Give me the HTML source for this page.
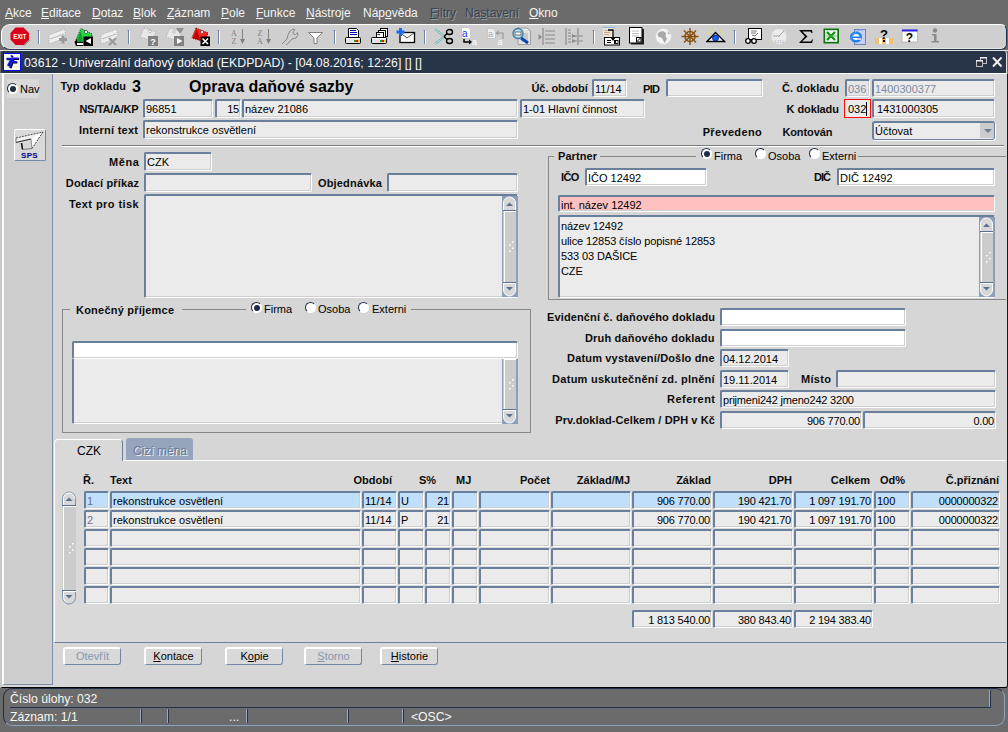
<!DOCTYPE html>
<html><head><meta charset="utf-8">
<style>
*{box-sizing:border-box}
html,body{margin:0;padding:0;width:1008px;height:732px;overflow:hidden;background:#6b6b6b;font-family:"Liberation Sans",sans-serif;font-size:11px;color:#000}
.a{position:absolute}
.menu{position:absolute;top:0;left:0;width:1008px;height:24px;background:#6b6b6b}
.mi{position:absolute;top:6px;font-size:12px;color:#f4f4f4;line-height:14px}
.mi u{text-decoration:underline;text-underline-offset:1px}
.mi.dis{color:#34425a;text-shadow:1px 1px 0 #9a9a90}
.tb{position:absolute;left:1px;top:24px;width:1006px;height:26px;background:#cfcfcf;border:1px solid #fff;border-right:1px solid #24344c;border-bottom:1px solid #24344c;box-shadow:inset 0 -1px 0 #e6e6e6;border-radius:9px 6px 6px 9px}
.sep{position:absolute;top:8px;width:2px;height:13px;border-left:1px solid #6f84a8;border-right:1px solid #fff}
.title{position:absolute;left:1px;top:51px;width:1006px;height:22px;background:#283548;border-right:1px solid #e0e0e0;border-top-left-radius:2px;border-top-right-radius:3px}
.tt{position:absolute;left:23px;top:4px;font-size:12.3px;color:#f8f8f8;line-height:16px;white-space:nowrap}
.win{position:absolute;left:0;top:73px;width:1008px;height:615px;background:#d6d6d6;border-left:2px solid #c8c8c8;border-top:1px solid #fff;border-right:1px solid #1a1a1a;border-bottom:1px solid #000;border-bottom-right-radius:3px}
.nav{position:absolute;left:2px;top:74px;width:51px;height:611px;background:#cdcdcd;border-left:2px solid #fff;border-right:1px solid #7d8fa8;border-bottom:1px solid #7d8fa8}
.lb{position:absolute;font-weight:bold;font-size:11px;white-space:nowrap;line-height:17px;color:#0c0c0c;padding-top:1px}
.f{position:absolute;background:#ebebeb;border-top:2px solid #6a7f9c;border-left:2px solid #6a7f9c;border-right:1px solid #fff;border-bottom:1px solid #fff;box-shadow:inset -1px -1px 0 #cfcfcf;border-radius:2px;font-size:11px;line-height:15px;padding-left:1px;padding-top:1px;white-space:nowrap;overflow:hidden;color:#000}
.f.w{background:#fff}
.f.r{text-align:right;padding-right:1px;letter-spacing:-0.2px}
.f.dis{color:#7a8aa2}
.hr{position:absolute;height:2px;border-top:1px solid #7c7c7c;border-bottom:1px solid #fff}
.fr{position:absolute;border:1px solid #888}
.rad{position:absolute;width:11px;height:11px;border-radius:50%;background:#fff;border:1px solid #1e2d44;border-right-color:#fff;border-bottom-color:#fff}
.rad.on::after{content:"";position:absolute;left:1.5px;top:1.5px;width:6px;height:6px;border-radius:50%;background:#1e2d44}
.rt{position:absolute;font-size:11px;line-height:14px;white-space:nowrap;padding-top:1px}
.btn{position:absolute;height:18px;background:#d9d9d9;border:1px solid #7488a6;border-top:2px solid #fff;border-left:2px solid #fff;border-radius:3px;text-align:center;font-size:11px;line-height:15px;padding-top:0px}
.btn.dis{color:#8797ad}
.vsb{position:absolute;width:16px;background:#c8c8c8;border:1px solid #8a9ab2;border-radius:7px}
.stat{position:absolute;left:3px;top:688px;width:1002px;height:38px;border:1px solid #1e2d44;border-right-color:#8ea2bf;border-bottom-color:#8ea2bf;border-radius:9px}
.st{position:absolute;font-size:12.2px;color:#f8f8f0;line-height:15px;white-space:nowrap;padding-top:1px}
.dv{position:absolute;top:709px;width:2px;height:14px;border-left:1px solid #9aaac2;border-right:1px solid #24344c}
</style></head>
<body>
<!-- MENU -->
<div class="menu">
<div class="mi" style="left:5px"><u>A</u>kce</div>
<div class="mi" style="left:41px"><u>E</u>ditace</div>
<div class="mi" style="left:92px"><u>D</u>otaz</div>
<div class="mi" style="left:133px"><u>B</u>lok</div>
<div class="mi" style="left:167px"><u>Z</u>áznam</div>
<div class="mi" style="left:221px"><u>P</u>ole</div>
<div class="mi" style="left:256px"><u>F</u>unkce</div>
<div class="mi" style="left:306px"><u>N</u>ástroje</div>
<div class="mi" style="left:363px">Náp<u>o</u>věda</div>
<div class="mi dis" style="left:430px"><u>F</u>iltry</div>
<div class="mi dis" style="left:465px">Na<u>s</u>tavení</div>
<div class="mi" style="left:529px"><u>O</u>kno</div>
</div>
<!-- TOOLBAR -->
<div class="tb" id="tb"></div>
<!--ICONS--><svg class="a" style="left:10px;top:27px" width="20" height="19" viewBox="0 0 20 19"><polygon points="5.5,0.5 13.5,0.5 19,6 19,12.5 13.5,18 5.5,18 0.5,12.5 0.5,6" fill="#d8001c"/><polygon points="14,18.5 19.5,13" stroke="#7a8a8a" stroke-width="1" fill="none"/><text x="9.8" y="11.8" font-family="Liberation Sans" font-weight="bold" font-size="6.4" fill="#fff" text-anchor="middle" textLength="13" lengthAdjust="spacingAndGlyphs">EXIT</text></svg>
<div class="a" style="left:38px;top:30px;width:1px;height:14px;background:#6f84a8"></div><div class="a" style="left:39px;top:31px;width:1px;height:13px;background:#fff"></div><div class="a" style="left:37px;top:30px;width:1px;height:1px;background:#9fb0c8"></div>
<div class="a" style="left:128px;top:30px;width:1px;height:14px;background:#6f84a8"></div><div class="a" style="left:129px;top:31px;width:1px;height:13px;background:#fff"></div><div class="a" style="left:127px;top:30px;width:1px;height:1px;background:#9fb0c8"></div>
<div class="a" style="left:218px;top:30px;width:1px;height:14px;background:#6f84a8"></div><div class="a" style="left:219px;top:31px;width:1px;height:13px;background:#fff"></div><div class="a" style="left:217px;top:30px;width:1px;height:1px;background:#9fb0c8"></div>
<div class="a" style="left:334px;top:30px;width:1px;height:14px;background:#6f84a8"></div><div class="a" style="left:335px;top:31px;width:1px;height:13px;background:#fff"></div><div class="a" style="left:333px;top:30px;width:1px;height:1px;background:#9fb0c8"></div>
<div class="a" style="left:424px;top:30px;width:1px;height:14px;background:#6f84a8"></div><div class="a" style="left:425px;top:31px;width:1px;height:13px;background:#fff"></div><div class="a" style="left:423px;top:30px;width:1px;height:1px;background:#9fb0c8"></div>
<div class="a" style="left:593px;top:30px;width:1px;height:14px;background:#6f84a8"></div><div class="a" style="left:594px;top:31px;width:1px;height:13px;background:#fff"></div><div class="a" style="left:592px;top:30px;width:1px;height:1px;background:#9fb0c8"></div>
<div class="a" style="left:734px;top:30px;width:1px;height:14px;background:#6f84a8"></div><div class="a" style="left:735px;top:31px;width:1px;height:13px;background:#fff"></div><div class="a" style="left:733px;top:30px;width:1px;height:1px;background:#9fb0c8"></div>
<svg class="a" style="left:48px;top:27px" width="20" height="20" viewBox="0 0 20 20"><polygon points="1,8 17,2 17,11 1,17" fill="#eeeeee" stroke="#b4b4b4" stroke-dasharray="1 1"/><line x1="2" y1="12" x2="16" y2="7" stroke="#b8b8b8"/><rect x="11" y="11" width="8" height="3" fill="#9a9a9a"/><rect x="13.5" y="8.5" width="3" height="8" fill="#9a9a9a"/></svg>
<svg class="a" style="left:74px;top:27px" width="20" height="20" viewBox="0 0 20 20"><polygon points="1,15 7,1.5 18,7 17,13 9,17" fill="#22dd44" stroke="#0a3a10" stroke-dasharray="1 1"/><polygon points="2,15 7,4 9,15" fill="#159a30"/><circle cx="12" cy="5" r="1.6" fill="#fff" stroke="#333" stroke-width="0.7"/><polygon points="0.5,15 3,12 3,15 9,15 9,19 2,19" fill="#000"/><rect x="3" y="16" width="6" height="2" fill="#fff"/><rect x="9.5" y="9.5" width="9.5" height="9.5" fill="#000"/><polygon points="11.5,14 17,11 17,17" fill="#fff"/></svg>
<svg class="a" style="left:100px;top:27px" width="20" height="20" viewBox="0 0 20 20"><polygon points="1,8 17,2 17,11 1,17" fill="#eeeeee" stroke="#b4b4b4" stroke-dasharray="1 1"/><line x1="2" y1="12" x2="16" y2="7" stroke="#b8b8b8"/><path d="M9,11 L16,18 M16,11 L9,18" stroke="#9a9a9a" stroke-width="2"/></svg>
<svg class="a" style="left:139px;top:27px" width="20" height="20" viewBox="0 0 20 20"><polygon points="5,1 17,5 13,14 1,10" fill="#e8e8e8" stroke="#b0b0b0" stroke-dasharray="1 1"/><rect x="9" y="9" width="10" height="10" fill="#808080"/><text x="14" y="17.5" font-family="Liberation Sans" font-weight="bold" font-size="9" fill="#fff" text-anchor="middle">?</text><circle cx="11" cy="4.5" r="1.3" fill="#fff" stroke="#999" stroke-width="0.6"/></svg>
<svg class="a" style="left:165px;top:27px" width="20" height="20" viewBox="0 0 20 20"><polygon points="5,1 17,5 13,14 1,10" fill="#e8e8e8" stroke="#b0b0b0" stroke-dasharray="1 1"/><polygon points="11,1 19,1 15,7" fill="#909090"/><rect x="9" y="9" width="10" height="10" fill="#808080"/><polygon points="12,11 17.5,14 12,17" fill="#fff"/><circle cx="9" cy="5" r="1.3" fill="#fff" stroke="#999" stroke-width="0.6"/></svg>
<svg class="a" style="left:191px;top:27px" width="20" height="20" viewBox="0 0 20 20"><polygon points="5,1 17,6 14,15 1,11" fill="#ff2020" stroke="#600" stroke-dasharray="1 1"/><polygon points="2,11 6,2 9,13" fill="#c00000"/><circle cx="11" cy="5" r="1.5" fill="#fff" stroke="#333" stroke-width="0.6"/><rect x="9.5" y="9.5" width="9.5" height="9.5" fill="#000"/><path d="M11.5,11.5 L17,17 M17,11.5 L11.5,17" stroke="#fff" stroke-width="1.6"/></svg>
<svg class="a" style="left:230px;top:28px" width="17" height="17" viewBox="0 0 17 17"><text x="1" y="7.5" font-family="Liberation Serif" font-size="8" fill="#808080">A</text><text x="1.5" y="15.5" font-family="Liberation Serif" font-size="8" fill="#808080">Z</text><line x1="12.5" y1="1" x2="12.5" y2="12" stroke="#808080"/><polygon points="10,11 15,11 12.5,16" fill="#808080"/></svg>
<svg class="a" style="left:256px;top:28px" width="17" height="17" viewBox="0 0 17 17"><text x="1.5" y="7.5" font-family="Liberation Serif" font-size="8" fill="#808080">Z</text><text x="1" y="15.5" font-family="Liberation Serif" font-size="8" fill="#808080">A</text><line x1="12.5" y1="1" x2="12.5" y2="12" stroke="#808080"/><polygon points="10,11 15,11 12.5,16" fill="#808080"/></svg>
<svg class="a" style="left:281px;top:28px" width="18" height="18" viewBox="0 0 18 18"><path d="M1,16 L6,11 L7,7 L9,3 L12,1 L14,1.5 L12,4 L12.5,6 L14.5,6.5 L16.5,4.5 L17,7 L15,10 L11,11 L5.5,17" fill="none" stroke="#8a8a8a" stroke-width="1"/></svg>
<svg class="a" style="left:308px;top:32px" width="16" height="13" viewBox="0 0 16 13"><polygon points="0.5,0.5 14.5,0.5 9,6 9,11.5 6,11.5 6,6" fill="#fff" stroke="#808080" stroke-width="1"/></svg>
<svg class="a" style="left:345px;top:28px" width="17" height="17" viewBox="0 0 17 17"><polygon points="3.5,0.5 11.5,0.5 13.5,2.5 13.5,9.5 3.5,9.5" fill="#fff" stroke="#000"/><line x1="5" y1="2.5" x2="11" y2="2.5" stroke="#0000c0"/><line x1="5" y1="4.5" x2="12" y2="4.5" stroke="#0000c0"/><line x1="5" y1="6.5" x2="12" y2="6.5" stroke="#0000c0"/><rect x="0.5" y="9.5" width="15" height="6" rx="1" fill="#e4e4e4" stroke="#000"/><rect x="1" y="10" width="14" height="1" fill="#fff"/><rect x="9" y="12" width="2" height="2" fill="#20a020"/><rect x="11" y="12" width="2" height="2" fill="#e01010"/><rect x="13" y="12" width="2" height="2" fill="#e0e020"/></svg>
<svg class="a" style="left:371px;top:28px" width="18" height="17" viewBox="0 0 18 17"><rect x="9.5" y="0.5" width="7" height="8" fill="#fff" stroke="#000"/><rect x="7.5" y="2.5" width="7" height="8" fill="#fff" stroke="#000"/><rect x="5.5" y="4.5" width="7" height="6" fill="#fff" stroke="#000"/><line x1="6.5" y1="6.5" x2="9" y2="6.5" stroke="#1a1a9a"/><rect x="0.5" y="9.5" width="15" height="6" rx="1" fill="#e4e4e4" stroke="#000"/><rect x="1" y="10" width="14" height="1" fill="#fff"/><rect x="9" y="12" width="2" height="2" fill="#20a020"/><rect x="11" y="12" width="2" height="2" fill="#e01010"/><rect x="13" y="12" width="2" height="2" fill="#e0e020"/></svg>
<svg class="a" style="left:396px;top:28px" width="20" height="17" viewBox="0 0 20 17"><rect x="4" y="4.5" width="14.5" height="10" fill="#fff" stroke="#000" stroke-width="1.3"/><polyline points="4.5,5 11,10 18,5" fill="none" stroke="#555"/><rect x="3" y="0" width="3" height="8" fill="#1070f0"/><rect x="0.5" y="2.5" width="8" height="3" fill="#1070f0"/></svg>
<svg class="a" style="left:434px;top:28px" width="20" height="17" viewBox="0 0 20 17"><path d="M1,1 L11,9 M1,16 L11,8" stroke="#60a8a8" stroke-width="2.2"/><path d="M1,1 L11,9 M1,16 L11,8" stroke="#e8f8f8" stroke-width="0.8"/><ellipse cx="15.5" cy="4" rx="3" ry="2.5" fill="none" stroke="#000" stroke-width="1.4"/><ellipse cx="15.5" cy="13" rx="3" ry="2.5" fill="none" stroke="#000" stroke-width="1.4"/><path d="M10,8.5 L13,5.5 M10,8.5 L13,11.5" stroke="#000" stroke-width="1.4"/></svg>
<svg class="a" style="left:461px;top:27px" width="18" height="19" viewBox="0 0 18 19"><polygon points="0.5,0.5 7,0.5 9.5,3 9.5,11.5 0.5,11.5" fill="#fff" stroke="#c8c8c8"/><text x="1" y="10" font-family="Liberation Sans" font-size="10" fill="#1030f0">a</text><polyline points="3,12 3,15 9,15" fill="none" stroke="#000" stroke-width="1.5"/><polygon points="8,12.5 11,15 8,17.5" fill="#000"/><text x="11" y="18" font-family="Liberation Sans" font-size="9" fill="#fff">a</text></svg>
<svg class="a" style="left:487px;top:27px" width="18" height="19" viewBox="0 0 18 19"><polygon points="0.5,1.5 6,1.5 8.5,4 8.5,11.5 0.5,11.5" fill="#f0f0f0" stroke="#c8c8c8"/><text x="1" y="10" font-family="Liberation Sans" font-size="9" fill="#a8a8a8">a</text><polyline points="16,12 16,6 11,6" fill="none" stroke="#9a9a9a" stroke-width="1.2"/><polygon points="11.5,3.5 8.5,6 11.5,8.5" fill="#9a9a9a"/><text x="10.5" y="18" font-family="Liberation Sans" font-size="9" fill="#fff">a</text></svg>
<svg class="a" style="left:512px;top:27px" width="20" height="19" viewBox="0 0 20 19"><polygon points="6,1 15,1 18.5,4 18.5,17.5 6,17.5" fill="#e4e4e4" stroke="#a0a0a0"/><rect x="9" y="6" width="7" height="9" fill="#c8c8c8"/><line x1="9" y1="11" x2="16" y2="16" stroke="#0a4ab0" stroke-width="3"/><circle cx="6" cy="6.5" r="5" fill="#b8e0f0" stroke="#3a7aa0" stroke-width="1.3"/><rect x="3" y="5" width="6" height="3" fill="#fff" stroke="#555" stroke-width="0.8"/></svg>
<svg class="a" style="left:538px;top:27px" width="18" height="19" viewBox="0 0 18 19"><line x1="5" y1="1" x2="5" y2="18" stroke="#8a8a8a" stroke-width="1.2"/><path d="M7,4 H17 M7,8 H17 M7,12 H17 M7,16 H17" stroke="#8a8a8a" stroke-width="1.2"/><polygon points="0.5,7 4,10 0.5,13" fill="#8a8a8a"/></svg>
<svg class="a" style="left:565px;top:27px" width="19" height="19" viewBox="0 0 19 19"><line x1="1" y1="1" x2="1" y2="18" stroke="#8a8a8a" stroke-width="1.2"/><line x1="13" y1="1" x2="13" y2="18" stroke="#8a8a8a" stroke-width="1.2"/><path d="M3,3 H6 M3,6 H6 M3,9 H6 M3,12 H6 M3,15 H6 M14,9 H18 M14,14 H18" stroke="#8a8a8a" stroke-width="1.2"/><polygon points="7,7 11,9 7,11" fill="#8a8a8a"/><polygon points="7,12 11,14 7,16" fill="#8a8a8a"/><line x1="7" y1="9" x2="12" y2="9" stroke="#8a8a8a"/><line x1="7" y1="14" x2="12" y2="14" stroke="#8a8a8a"/></svg>
<svg class="a" style="left:602px;top:27px" width="20" height="19" viewBox="0 0 20 19"><rect x="1" y="0" width="12" height="1" fill="#80b8f0"/><rect x="1" y="1" width="11" height="9" fill="#efe6d6"/><path d="M2,3.5 H8 M2,5.5 H8 M2,7.5 H7" stroke="#b89878" stroke-width="0.8"/><rect x="2.5" y="10.5" width="15" height="7.5" fill="#fff" stroke="#000"/><polyline points="6,3 11,3 11,11" fill="none" stroke="#000" stroke-width="1.3"/><polygon points="8,10 14,10 11,14" fill="#000"/><path d="M5,13.5 H9 M5,15.5 H9" stroke="#000"/><path d="M12.5,13 V17" stroke="#000"/><rect x="13.5" y="13.5" width="2.5" height="3" fill="none" stroke="#000" stroke-width="0.9"/></svg>
<svg class="a" style="left:629px;top:27px" width="17" height="18" viewBox="0 0 17 18"><rect x="2" y="2" width="13" height="15.5" fill="#222"/><rect x="0.5" y="0.5" width="12.5" height="15.5" fill="#fff" stroke="#000"/><path d="M3,4 H10 M3,6.5 H10 M3,9 H10" stroke="#b0b0b0" stroke-width="0.8"/><rect x="7.5" y="10.5" width="4.5" height="4.5" fill="#fff" stroke="#000"/><line x1="8" y1="14.5" x2="11.5" y2="11" stroke="#000"/></svg>
<svg class="a" style="left:655px;top:28px" width="18" height="17" viewBox="0 0 18 17"><circle cx="8.5" cy="8.5" r="8" fill="#f4f4f4" stroke="#d4d4d4"/><path d="M4,4 L8,3 L11,5 L10.5,8 L12,11 L9.5,15 L8,12 L6.5,9.5 L3.5,9 L2.5,6 Z M12.5,3 L15,5.5 L13.5,6.5 Z" fill="#a8a8a8"/></svg>
<svg class="a" style="left:681px;top:27px" width="18" height="19" viewBox="0 0 18 19"><circle cx="9" cy="9.5" r="5" fill="none" stroke="#8a5010" stroke-width="1.6"/><circle cx="9" cy="9.5" r="1.6" fill="#8a5010"/><path d="M9,1 V18 M0.5,9.5 H17.5 M3,3.5 L15,15.5 M15,3.5 L3,15.5" stroke="#8a5010" stroke-width="1.4"/></svg>
<svg class="a" style="left:706px;top:28px" width="20" height="15" viewBox="0 0 20 15"><path d="M9.5,0 V2 M4,1.5 L5.5,3.5 M15,1.5 L13.5,3.5 M1.5,5 L3,6 M17.5,5 L16,6" stroke="#f0f000" stroke-width="1"/><polygon points="1,13.5 9.5,4.5 18.5,13.5" fill="#fff" stroke="#000" stroke-width="1.4"/><ellipse cx="9.5" cy="10" rx="3" ry="3" fill="#1060f0" stroke="#001080" stroke-width="0.8"/></svg>
<svg class="a" style="left:745px;top:28px" width="18" height="16" viewBox="0 0 18 16"><rect x="3.5" y="0.5" width="13" height="11" fill="#fff" stroke="#000"/><path d="M6,3 H12 M6,5 H11 M7,7 L10,8 L13,5" stroke="#555" stroke-width="0.8" fill="none"/><circle cx="3" cy="13" r="2.3" fill="#fff" stroke="#000" stroke-width="1.3"/><circle cx="9" cy="13" r="2.3" fill="#fff" stroke="#000" stroke-width="1.3"/><line x1="5.3" y1="13" x2="6.7" y2="13" stroke="#000"/></svg>
<svg class="a" style="left:770px;top:28px" width="18" height="17" viewBox="0 0 18 17"><circle cx="9" cy="8.5" r="8" fill="#ececec" stroke="#d0d0d0"/><line x1="3" y1="8" x2="10" y2="8" stroke="#a0a0a0"/><line x1="9" y1="8" x2="14" y2="3" stroke="#a0a0a0"/><text x="9" y="14.5" font-family="Liberation Serif" font-size="5" fill="#a0a0a0" text-anchor="middle">1315</text></svg>
<svg class="a" style="left:798px;top:29px" width="16" height="15" viewBox="0 0 16 15"><path d="M1,1 H14 L14.5,4 H13.5 L12.5,2.5 H4.5 L9.5,7.5 L4,12.5 H13 L14,10.5 H15 L14,14 H1 L7,7.5 Z" fill="#000"/></svg>
<svg class="a" style="left:823px;top:28px" width="17" height="16" viewBox="0 0 17 16"><rect x="0.5" y="0.5" width="15.5" height="15" fill="#107010"/><rect x="2.5" y="2.5" width="11.5" height="11" fill="#e8f4e8" stroke="#fff" stroke-width="0.6"/><path d="M4,4 L12,12 M12,4 L4,12" stroke="#109010" stroke-width="2.2"/><path d="M3,8 H14" stroke="#60b060" stroke-width="0.8"/></svg>
<svg class="a" style="left:849px;top:28px" width="17" height="17" viewBox="0 0 17 17"><rect x="5.5" y="1.5" width="11" height="15" fill="#c8d0f0" stroke="#7080c0"/><ellipse cx="7" cy="9" rx="6" ry="5.5" fill="#2080f0"/><ellipse cx="7" cy="9" rx="3.5" ry="3" fill="#fff"/><rect x="3" y="8.5" width="8" height="1.5" fill="#2080f0"/><rect x="8" y="10" width="4" height="2" fill="#c8d0f0"/><path d="M1,12 Q8,0 14,2" fill="none" stroke="#60a8f8" stroke-width="1"/></svg>
<svg class="a" style="left:875px;top:28px" width="19" height="17" viewBox="0 0 19 17"><rect x="0" y="10" width="4" height="6" fill="#f0c070"/><rect x="7" y="10" width="4" height="6" fill="#f0c070"/><rect x="14" y="10" width="4" height="6" fill="#f0c070"/><rect x="4" y="10" width="3" height="6" fill="#fff"/><rect x="11" y="10" width="3" height="6" fill="#fff"/><text x="9" y="11" font-family="Liberation Sans" font-weight="bold" font-size="13" fill="#000" text-anchor="middle">?</text><rect x="8" y="12" width="2" height="2" fill="#000"/></svg>
<svg class="a" style="left:901px;top:29px" width="18" height="16" viewBox="0 0 18 16"><rect x="1" y="1" width="15.5" height="12" fill="#fff" stroke="#b0b0b0" stroke-width="0.8"/><rect x="1" y="0.5" width="15.5" height="2" fill="#3020e0"/><text x="8.5" y="13" font-family="Liberation Sans" font-weight="bold" font-size="12" fill="#000" text-anchor="middle">?</text></svg>
<svg class="a" style="left:930px;top:28px" width="11" height="15" viewBox="0 0 11 15"><circle cx="5" cy="2.5" r="2.2" fill="#8a8a8a"/><path d="M2,6 H6.5 V13 H9 V14.5 H1.5 V13 H4 V7.5 H2 Z" fill="#8a8a8a"/></svg><!--/ICONS-->
<div class="a" style="left:0;top:50px;width:1008px;height:1px;background:#e4e4e4"></div>
<!-- TITLE -->
<div class="title">
<svg class="a" style="left:2px;top:2px" width="18" height="18" viewBox="0 0 18 18"><rect x="0.5" y="0.5" width="17" height="17" fill="#f6f6ec" stroke="#0808f0"/><g fill="#000" transform="translate(0.8,0.8)"><polygon points="3.5,4.7 9.3,4.7 8.9,6.4 3.1,6.4"/><polygon points="7.2,6.4 9,6.4 5.6,12.5 3.8,12.5"/><polygon points="9.6,4.5 15.6,4.5 15.1,6.3 10.7,6.3 10.2,8 13.8,8 13.4,9.7 9.5,9.7 7.8,14.5 5.8,14.5"/><circle cx="8.6" cy="3" r="1"/></g><g fill="#1414ff"><polygon points="3.5,4.7 9.3,4.7 8.9,6.4 3.1,6.4"/><polygon points="7.2,6.4 9,6.4 5.6,12.5 3.8,12.5"/><polygon points="9.6,4.5 15.6,4.5 15.1,6.3 10.7,6.3 10.2,8 13.8,8 13.4,9.7 9.5,9.7 7.8,14.5 5.8,14.5"/><circle cx="8.6" cy="3" r="1"/></g></svg>
<svg class="a" style="left:974px;top:5px" width="30" height="12" viewBox="0 0 30 12"><rect x="5.5" y="1.5" width="6" height="6" fill="none" stroke="#c0c0c0"/><rect x="5" y="1" width="7" height="1.5" fill="#f0f0f0"/><rect x="1.5" y="4.5" width="6" height="6" fill="#283548" stroke="#c0c0c0"/><rect x="1" y="4" width="7" height="1.5" fill="#f0f0f0"/><path d="M18,1.5 L26.5,10.5 M26.5,1.5 L18,10.5" stroke="#f4f4f4" stroke-width="1.9"/></svg>
<div class="tt">03612 - Univerzální daňový doklad (EKDPDAD) - [04.08.2016; 12:26] [] []</div>
</div>
<!-- WINDOW -->
<div class="win"></div>
<div class="nav"></div>
<!-- NAV -->
<div class="a" style="left:7px;top:79px;width:32px;height:19px;background:#d9d9d9"></div>
<div class="rad on" style="left:7px;top:83px"></div>
<div class="rt" style="left:20px;top:81px">Nav</div>
<div class="a" style="left:14px;top:129px;width:32px;height:32px;background:#d9d9d9;border:1px solid #fff;border-right-color:#7488a6;border-bottom-color:#7488a6;border-radius:2px"></div>
<svg class="a" style="left:15px;top:131px" width="30" height="20" viewBox="0 0 30 20"><polygon points="1,7 28,1 17,17.5 7,18.5 6,12 1,11.5" fill="#f2f2f2"/><polygon points="6,12 16,8.5 17,17.5 7,18.5" fill="#d8d8d8"/><polygon points="16,8 28,1 17,17.5" fill="#fff"/><path d="M1,7 L28,1" stroke="#505050" stroke-width="1" stroke-dasharray="2 1"/><path d="M28,1 L17,17.5" stroke="#404040" stroke-width="1" stroke-dasharray="2 1"/><path d="M1,11.5 L16,8" stroke="#202020" stroke-width="1.2"/><path d="M6.5,12 L7.5,18.5" stroke="#101010" stroke-width="1.6"/><path d="M16,8 L17,17.5" stroke="#707070" stroke-width="0.8"/><path d="M7.5,18.5 L17,17.5" stroke="#606060" stroke-width="0.8"/><path d="M1,7 L1,11.5" stroke="#606060" stroke-width="0.8"/></svg>
<div class="a" style="left:21px;top:152px;font-size:8px;font-weight:bold;color:#000088;line-height:8px;letter-spacing:0.3px">SPS</div>

<!-- HEADER -->
<div class="lb" style="left:60.5px;top:77px;letter-spacing:0.15px">Typ dokladu</div>
<div class="a" style="left:132px;top:77px;font-size:16px;font-weight:bold;line-height:20px">3</div>
<div class="a" style="left:189px;top:77px;font-size:16px;font-weight:bold;line-height:20px;white-space:nowrap">Oprava daňové sazby</div>
<div class="lb" style="left:531.5px;top:79px;letter-spacing:-0.07px">Úč. období</div>
<div class="f" style="left:592px;top:79px;width:35px;height:18px">11/14</div>
<div class="lb" style="left:643.0px;top:80px;letter-spacing:-0.67px">PID</div>
<div class="f" style="left:666px;top:79px;width:97px;height:18px"></div>
<div class="lb" style="left:782.0px;top:79px;letter-spacing:0.09px">Č. dokladu</div>
<div class="f dis" style="left:845px;top:79px;width:25px;height:18px;padding-left:1px;overflow:visible;background:#e6e6e6">036</div>
<div class="f dis" style="left:872px;top:79px;width:123px;height:18px">1400300377</div>

<div class="lb" style="left:79.4px;top:100px;letter-spacing:-0.27px">NS/TA/A/KP</div>
<div class="f" style="left:143px;top:99px;width:70px;height:19px">96851</div>
<div class="f r" style="left:215px;top:99px;width:26px;height:19px">15</div>
<div class="f" style="left:242px;top:99px;width:276px;height:19px">název 21086</div>
<div class="f" style="left:520px;top:99px;width:125px;height:19px">1-01 Hlavní činnost</div>
<div class="lb" style="left:786.6px;top:100px;letter-spacing:-0.10px">K dokladu</div>
<div class="a" style="left:844px;top:99px;width:27px;height:19px;border:1px solid #fa0a0a;background:#ebebeb;font-size:11px;line-height:16px;padding-left:3px;padding-top:1px">032<span style="display:inline-block;width:1px;height:14px;background:#000;vertical-align:-3px"></span></div>
<div class="f" style="left:872px;top:99px;width:123px;height:19px;padding-left:3px">1431000305</div>

<div class="lb" style="left:79.0px;top:121px;letter-spacing:0.25px">Interní text</div>
<div class="f" style="left:143px;top:120px;width:375px;height:19px">rekonstrukce osvětlení</div>
<div class="lb" style="left:702.7px;top:123px;letter-spacing:0.34px">Převedeno</div>
<div class="lb" style="left:782.4px;top:123px;letter-spacing:-0.09px">Kontován</div>
<div class="f" style="left:872px;top:121px;width:123px;height:19px;border-right:1px solid #6a7f9c;border-bottom:1px solid #6a7f9c;box-shadow:1px 1px 0 #fff;border-radius:3px">Účtovat</div>
<div class="a" style="left:980px;top:123px;width:14px;height:15px;background:#cbcbcb"></div>
<div class="a" style="left:984px;top:129px;width:0;height:0;border-left:4px solid transparent;border-right:4px solid transparent;border-top:4px solid #6a7f9c"></div>

<div class="hr" style="left:62px;top:145px;width:942px"></div>

<!-- LEFT MID -->
<div class="lb" style="left:109.0px;top:153px;letter-spacing:0.56px">Měna</div>
<div class="f" style="left:144px;top:152px;width:68px;height:19px">CZK</div>
<div class="lb" style="left:65.8px;top:174px;letter-spacing:0.14px">Dodací příkaz</div>
<div class="f" style="left:144px;top:173px;width:168px;height:19px"></div>
<div class="lb" style="left:317.9px;top:174px;letter-spacing:0.19px">Objednávka</div>
<div class="f" style="left:387px;top:173px;width:131px;height:19px"></div>
<div class="lb" style="left:68.9px;top:195px;letter-spacing:0.43px">Text pro tisk</div>
<div class="f" style="left:144px;top:194px;width:374px;height:104px"></div>
<!--SB--><svg class="a" style="left:502px;top:196px" width="16" height="101" viewBox="0 0 16 101"><rect x="0" y="0" width="16" height="101" fill="#8c9eb8"/><rect x="1" y="14" width="13" height="73" fill="#cccccc"/><line x1="2.5" y1="14" x2="2.5" y2="87" stroke="#fff"/><path d="M1.5,14.5 V7.0 A6.0,6.0 0 0 1 13.5,7.0 V14.5 Z" fill="#d8d8d8" stroke="#fff"/><polygon points="4.0,10 11.0,10 7.5,6.5" fill="#5a7090"/><rect x="1" y="14" width="13" height="1" fill="#5a7090"/><rect x="2" y="15" width="12" height="1" fill="#fff"/><path d="M1.5,86.5 V94.0 A6.0,6.0 0 0 0 13.5,94.0 V86.5 Z" fill="#d8d8d8" stroke="#fff"/><polygon points="4.0,91 11.0,91 7.5,94.5" fill="#5a7090"/><rect x="1" y="86" width="13" height="1" fill="#5a7090"/><rect x="2" y="87" width="12" height="1" fill="#fff"/><rect x="10" y="45.5" width="1.5" height="1.5" fill="#fff"/><rect x="7" y="48.5" width="1.5" height="1.5" fill="#fff"/><rect x="10" y="51.5" width="1.5" height="1.5" fill="#fff"/><rect x="7" y="54.5" width="1.5" height="1.5" fill="#fff"/></svg>

<!-- KONECNY PRIJEMCE -->
<div class="fr" style="left:62px;top:309px;width:469px;height:124px"></div>
<div class="a" style="left:70px;top:302px;width:112px;height:14px;background:#d6d6d6"></div>
<div class="lb" style="left:76.0px;top:301px;letter-spacing:0.22px">Konečný příjemce</div>
<div class="a" style="left:246px;top:302px;width:165px;height:14px;background:#d6d6d6"></div>
<div class="rad on" style="left:251px;top:302px"></div>
<div class="rt" style="left:264px;top:301px">Firma</div>
<div class="rad" style="left:305px;top:302px"></div>
<div class="rt" style="left:318px;top:301px">Osoba</div>
<div class="rad" style="left:358px;top:302px"></div>
<div class="rt" style="left:372px;top:301px">Externi</div>
<div class="f" style="left:72px;top:358px;width:446px;height:66px;border-top:0"></div>
<!--SB--><svg class="a" style="left:502px;top:344px" width="16" height="80" viewBox="0 0 16 80"><rect x="0" y="0" width="16" height="80" fill="#8c9eb8"/><rect x="1" y="14" width="13" height="52" fill="#cccccc"/><line x1="2.5" y1="14" x2="2.5" y2="66" stroke="#fff"/><path d="M1.5,14.5 V7.0 A6.0,6.0 0 0 1 13.5,7.0 V14.5 Z" fill="#d8d8d8" stroke="#fff"/><polygon points="4.0,10 11.0,10 7.5,6.5" fill="#5a7090"/><rect x="1" y="14" width="13" height="1" fill="#5a7090"/><rect x="2" y="15" width="12" height="1" fill="#fff"/><path d="M1.5,65.5 V73.0 A6.0,6.0 0 0 0 13.5,73.0 V65.5 Z" fill="#d8d8d8" stroke="#fff"/><polygon points="4.0,70 11.0,70 7.5,73.5" fill="#5a7090"/><rect x="1" y="65" width="13" height="1" fill="#5a7090"/><rect x="2" y="66" width="12" height="1" fill="#fff"/><rect x="10" y="35.0" width="1.5" height="1.5" fill="#fff"/><rect x="7" y="38.0" width="1.5" height="1.5" fill="#fff"/><rect x="10" y="41.0" width="1.5" height="1.5" fill="#fff"/><rect x="7" y="44.0" width="1.5" height="1.5" fill="#fff"/></svg>
<div class="f w" style="left:72px;top:341px;width:446px;height:18px"></div>

<!-- PARTNER -->
<div class="fr" style="left:548px;top:156px;width:458px;height:144px;border-right:0"></div>
<div class="a" style="left:554px;top:148px;width:46px;height:14px;background:#d6d6d6"></div>
<div class="lb" style="left:558.0px;top:147px;letter-spacing:0.08px">Partner</div>
<div class="a" style="left:696px;top:147px;width:162px;height:14px;background:#d6d6d6"></div>
<div class="rad on" style="left:701px;top:148px"></div>
<div class="rt" style="left:714px;top:148px">Firma</div>
<div class="rad" style="left:755px;top:148px"></div>
<div class="rt" style="left:768px;top:148px">Osoba</div>
<div class="rad" style="left:809px;top:148px"></div>
<div class="rt" style="left:822px;top:148px">Externi</div>
<div class="lb" style="left:561.0px;top:168px;letter-spacing:-0.63px">IČO</div>
<div class="f w" style="left:585px;top:168px;width:122px;height:18px">IČO 12492</div>
<div class="lb" style="left:814.0px;top:168px;letter-spacing:-0.98px">DIČ</div>
<div class="f w" style="left:837px;top:168px;width:158px;height:18px">DIČ 12492</div>
<div class="f" style="left:558px;top:195px;width:437px;height:17px;background:#ffc0c0">int. název 12492</div>
<div class="f" style="left:558px;top:215px;width:437px;height:83px;line-height:15px;padding-top:2px;letter-spacing:-0.1px">název 12492<br>ulice 12853 číslo popisné 12853<br>533 03 DAŠICE<br>CZE</div>
<!--SB--><svg class="a" style="left:979px;top:217px" width="16" height="80" viewBox="0 0 16 80"><rect x="0" y="0" width="16" height="80" fill="#8c9eb8"/><rect x="1" y="14" width="13" height="52" fill="#cccccc"/><line x1="2.5" y1="14" x2="2.5" y2="66" stroke="#fff"/><path d="M1.5,14.5 V7.0 A6.0,6.0 0 0 1 13.5,7.0 V14.5 Z" fill="#d8d8d8" stroke="#fff"/><polygon points="4.0,10 11.0,10 7.5,6.5" fill="#5a7090"/><rect x="1" y="14" width="13" height="1" fill="#5a7090"/><rect x="2" y="15" width="12" height="1" fill="#fff"/><path d="M1.5,65.5 V73.0 A6.0,6.0 0 0 0 13.5,73.0 V65.5 Z" fill="#d8d8d8" stroke="#fff"/><polygon points="4.0,70 11.0,70 7.5,73.5" fill="#5a7090"/><rect x="1" y="65" width="13" height="1" fill="#5a7090"/><rect x="2" y="66" width="12" height="1" fill="#fff"/><rect x="10" y="35.0" width="1.5" height="1.5" fill="#fff"/><rect x="7" y="38.0" width="1.5" height="1.5" fill="#fff"/><rect x="10" y="41.0" width="1.5" height="1.5" fill="#fff"/><rect x="7" y="44.0" width="1.5" height="1.5" fill="#fff"/></svg>

<!-- RIGHT MID -->
<div class="lb" style="left:547.0px;top:308px;letter-spacing:0.13px">Evidenční č. daňového dokladu</div>
<div class="f w" style="left:720px;top:308px;width:186px;height:18px"></div>
<div class="lb" style="left:585.0px;top:329px;letter-spacing:0.18px">Druh daňového dokladu</div>
<div class="f w" style="left:720px;top:329px;width:186px;height:18px"></div>
<div class="lb" style="left:567.1px;top:349px;letter-spacing:0.16px">Datum vystavení/Došlo dne</div>
<div class="f" style="left:720px;top:349px;width:69px;height:18px">04.12.2014</div>
<div class="lb" style="left:552.1px;top:370px;letter-spacing:0.27px">Datum uskutečnění zd. plnění</div>
<div class="f" style="left:720px;top:370px;width:69px;height:18px">19.11.2014</div>
<div class="lb" style="left:801.0px;top:370px;letter-spacing:0.32px">Místo</div>
<div class="f" style="left:836px;top:370px;width:160px;height:18px"></div>
<div class="lb" style="left:667.1px;top:390px;letter-spacing:0.47px">Referent</div>
<div class="f" style="left:720px;top:390px;width:276px;height:18px;letter-spacing:-0.2px">prijmeni242 jmeno242 3200</div>
<div class="lb" style="left:555.3px;top:411px;letter-spacing:0.10px">Prv.doklad-Celkem / DPH v Kč</div>
<div class="f r" style="left:720px;top:411px;width:142px;height:18px">906 770.00</div>
<div class="f r" style="left:863px;top:411px;width:133px;height:18px">0.00</div>

<!-- TABS -->
<div class="a" style="left:54px;top:460px;width:952px;height:183px;background:#d9d9d9;border-top:1px solid #fff;border-left:1px solid #fff;border-bottom:1px solid #6a7f9c"></div>
<div class="a" style="left:54px;top:439px;width:69px;height:22px;background:#d9d9d9;border-top:1px solid #fff;border-left:1px solid #fff;border-right:1px solid #6a7f9c;border-radius:4px 4px 0 0"></div>
<div class="a" style="left:77px;top:444px;font-size:12px;line-height:15px">CZK</div>
<div class="a" style="left:126px;top:438px;width:67px;height:22px;background:#97a5bc;border-radius:3px 3px 0 0"></div>
<div class="a" style="left:133px;top:444px;font-size:12px;line-height:15px;color:#687a98;text-shadow:1px 1px 0 #eef0f4">Cizí měna</div>
<!-- TABLE -->
<div class="f dis" style="left:84px;top:491px;width:25px;height:18px;background:#bfdffb;color:#6c7090">1</div>
<div class="f" style="left:110px;top:491px;width:251px;height:18px;background:#bfdffb">rekonstrukce osvětlení</div>
<div class="f" style="left:362px;top:491px;width:35px;height:18px;background:#bfdffb">11/14</div>
<div class="f" style="left:398px;top:491px;width:26px;height:18px;background:#bfdffb">U</div>
<div class="f r" style="left:425px;top:491px;width:26px;height:18px;background:#bfdffb">21</div>
<div class="f" style="left:452px;top:491px;width:26px;height:18px;background:#bfdffb"></div>
<div class="f r" style="left:479px;top:491px;width:71px;height:18px;background:#bfdffb"></div>
<div class="f r" style="left:551px;top:491px;width:80px;height:18px;background:#bfdffb"></div>
<div class="f r" style="left:632px;top:491px;width:80px;height:18px;background:#bfdffb">906 770.00</div>
<div class="f r" style="left:713px;top:491px;width:80px;height:18px;background:#bfdffb">190 421.70</div>
<div class="f r" style="left:794px;top:491px;width:79px;height:18px;background:#bfdffb">1 097 191.70</div>
<div class="f" style="left:874px;top:491px;width:36px;height:18px;background:#bfdffb">100</div>
<div class="f r" style="left:911px;top:491px;width:89px;height:18px;background:#bfdffb">0000000322</div>
<div class="f dis" style="left:84px;top:510px;width:25px;height:18px;color:#6c7090">2</div>
<div class="f" style="left:110px;top:510px;width:251px;height:18px">rekonstrukce osvětlení</div>
<div class="f" style="left:362px;top:510px;width:35px;height:18px">11/14</div>
<div class="f" style="left:398px;top:510px;width:26px;height:18px">P</div>
<div class="f r" style="left:425px;top:510px;width:26px;height:18px">21</div>
<div class="f" style="left:452px;top:510px;width:26px;height:18px"></div>
<div class="f r" style="left:479px;top:510px;width:71px;height:18px"></div>
<div class="f r" style="left:551px;top:510px;width:80px;height:18px"></div>
<div class="f r" style="left:632px;top:510px;width:80px;height:18px">906 770.00</div>
<div class="f r" style="left:713px;top:510px;width:80px;height:18px">190 421.70</div>
<div class="f r" style="left:794px;top:510px;width:79px;height:18px">1 097 191.70</div>
<div class="f" style="left:874px;top:510px;width:36px;height:18px">100</div>
<div class="f r" style="left:911px;top:510px;width:89px;height:18px">0000000322</div>
<div class="f dis" style="left:84px;top:529px;width:25px;height:18px"></div>
<div class="f" style="left:110px;top:529px;width:251px;height:18px"></div>
<div class="f" style="left:362px;top:529px;width:35px;height:18px"></div>
<div class="f" style="left:398px;top:529px;width:26px;height:18px"></div>
<div class="f r" style="left:425px;top:529px;width:26px;height:18px"></div>
<div class="f" style="left:452px;top:529px;width:26px;height:18px"></div>
<div class="f r" style="left:479px;top:529px;width:71px;height:18px"></div>
<div class="f r" style="left:551px;top:529px;width:80px;height:18px"></div>
<div class="f r" style="left:632px;top:529px;width:80px;height:18px"></div>
<div class="f r" style="left:713px;top:529px;width:80px;height:18px"></div>
<div class="f r" style="left:794px;top:529px;width:79px;height:18px"></div>
<div class="f" style="left:874px;top:529px;width:36px;height:18px"></div>
<div class="f r" style="left:911px;top:529px;width:89px;height:18px"></div>
<div class="f dis" style="left:84px;top:548px;width:25px;height:18px"></div>
<div class="f" style="left:110px;top:548px;width:251px;height:18px"></div>
<div class="f" style="left:362px;top:548px;width:35px;height:18px"></div>
<div class="f" style="left:398px;top:548px;width:26px;height:18px"></div>
<div class="f r" style="left:425px;top:548px;width:26px;height:18px"></div>
<div class="f" style="left:452px;top:548px;width:26px;height:18px"></div>
<div class="f r" style="left:479px;top:548px;width:71px;height:18px"></div>
<div class="f r" style="left:551px;top:548px;width:80px;height:18px"></div>
<div class="f r" style="left:632px;top:548px;width:80px;height:18px"></div>
<div class="f r" style="left:713px;top:548px;width:80px;height:18px"></div>
<div class="f r" style="left:794px;top:548px;width:79px;height:18px"></div>
<div class="f" style="left:874px;top:548px;width:36px;height:18px"></div>
<div class="f r" style="left:911px;top:548px;width:89px;height:18px"></div>
<div class="f dis" style="left:84px;top:567px;width:25px;height:18px"></div>
<div class="f" style="left:110px;top:567px;width:251px;height:18px"></div>
<div class="f" style="left:362px;top:567px;width:35px;height:18px"></div>
<div class="f" style="left:398px;top:567px;width:26px;height:18px"></div>
<div class="f r" style="left:425px;top:567px;width:26px;height:18px"></div>
<div class="f" style="left:452px;top:567px;width:26px;height:18px"></div>
<div class="f r" style="left:479px;top:567px;width:71px;height:18px"></div>
<div class="f r" style="left:551px;top:567px;width:80px;height:18px"></div>
<div class="f r" style="left:632px;top:567px;width:80px;height:18px"></div>
<div class="f r" style="left:713px;top:567px;width:80px;height:18px"></div>
<div class="f r" style="left:794px;top:567px;width:79px;height:18px"></div>
<div class="f" style="left:874px;top:567px;width:36px;height:18px"></div>
<div class="f r" style="left:911px;top:567px;width:89px;height:18px"></div>
<div class="f dis" style="left:84px;top:586px;width:25px;height:18px"></div>
<div class="f" style="left:110px;top:586px;width:251px;height:18px"></div>
<div class="f" style="left:362px;top:586px;width:35px;height:18px"></div>
<div class="f" style="left:398px;top:586px;width:26px;height:18px"></div>
<div class="f r" style="left:425px;top:586px;width:26px;height:18px"></div>
<div class="f" style="left:452px;top:586px;width:26px;height:18px"></div>
<div class="f r" style="left:479px;top:586px;width:71px;height:18px"></div>
<div class="f r" style="left:551px;top:586px;width:80px;height:18px"></div>
<div class="f r" style="left:632px;top:586px;width:80px;height:18px"></div>
<div class="f r" style="left:713px;top:586px;width:80px;height:18px"></div>
<div class="f r" style="left:794px;top:586px;width:79px;height:18px"></div>
<div class="f" style="left:874px;top:586px;width:36px;height:18px"></div>
<div class="f r" style="left:911px;top:586px;width:89px;height:18px"></div>
<div class="lb" style="left:83px;top:471px">Ř.</div>
<div class="lb" style="left:110px;top:471px">Text</div>
<div class="lb" style="right:616px;top:471px">Období</div>
<div class="lb" style="left:419px;top:471px">S%</div>
<div class="lb" style="left:456px;top:471px">MJ</div>
<div class="lb" style="right:458px;top:471px">Počet</div>
<div class="lb" style="right:378px;top:471px">Základ/MJ</div>
<div class="lb" style="right:297px;top:471px">Základ</div>
<div class="lb" style="right:216px;top:471px">DPH</div>
<div class="lb" style="right:138px;top:471px">Celkem</div>
<div class="lb" style="left:880px;top:471px">Od%</div>
<div class="lb" style="right:9px;top:471px">Č.přiznání</div>
<div class="f r" style="left:632px;top:610px;width:80px;height:18px">1 813 540.00</div>
<div class="f r" style="left:713px;top:610px;width:80px;height:18px">380 843.40</div>
<div class="f r" style="left:794px;top:610px;width:79px;height:18px">2 194 383.40</div>
<!--SB--><svg class="a" style="left:62px;top:491px" width="15" height="114" viewBox="0 0 15 114"><rect x="0" y="14" width="14" height="86" fill="#cccccc"/><line x1="1.5" y1="14" x2="1.5" y2="100" stroke="#fff"/><path d="M0.5,14.5 V7.5 A6.5,6.5 0 0 1 13.5,7.5 V14.5 Z" fill="#d8d8d8" stroke="#7f92ae"/><path d="M1.5,14 V7.5 A5.5,5.5 0 0 1 12.5,7.5" fill="none" stroke="#fff"/><polygon points="3.5,10 10.5,10 7.0,6.5" fill="#5a7090"/><rect x="0" y="14" width="14" height="1" fill="#5a7090"/><rect x="1" y="15" width="13" height="1" fill="#fff"/><path d="M0.5,99.5 V106.5 A6.5,6.5 0 0 0 13.5,106.5 V99.5 Z" fill="#d8d8d8" stroke="#7f92ae"/><path d="M1.5,100 V106.5 A5.5,5.5 0 0 0 4,111" fill="none" stroke="#fff"/><polygon points="3.5,104 10.5,104 7.0,107.5" fill="#5a7090"/><rect x="0" y="99" width="14" height="1" fill="#5a7090"/><rect x="1" y="100" width="13" height="1" fill="#fff"/><rect x="10" y="52.0" width="1.5" height="1.5" fill="#fff"/><rect x="7" y="55.0" width="1.5" height="1.5" fill="#fff"/><rect x="10" y="58.0" width="1.5" height="1.5" fill="#fff"/><rect x="7" y="61.0" width="1.5" height="1.5" fill="#fff"/></svg>
<!-- BUTTONS -->
<div class="btn dis" style="left:63px;top:647px;width:58px">Otevřít</div>
<div class="btn" style="left:144px;top:647px;width:58px"><u>K</u>ontace</div>
<div class="btn" style="left:225px;top:647px;width:58px">K<u>o</u>pie</div>
<div class="btn dis" style="left:304px;top:647px;width:58px"><u>S</u>torno</div>
<div class="btn" style="left:380px;top:647px;width:58px"><u>H</u>istorie</div>

<!-- STATUS -->
<div class="stat"></div>
<div class="a" style="left:10px;top:707px;width:981px;height:1px;background:#24344c"></div>
<div class="st" style="left:10px;top:691px">Číslo úlohy: 032</div>
<div class="st" style="left:10px;top:709px">Záznam: 1/1</div>
<div class="dv" style="left:140px"></div>
<div class="dv" style="left:167px"></div>
<div class="dv" style="left:246px"></div>
<div class="dv" style="left:347px"></div>
<div class="dv" style="left:402px"></div>
<div class="dv" style="left:989px;top:690px;height:17px"></div>
<div class="st" style="left:229px;top:709px">...</div>
<div class="st" style="left:411px;top:709px">&lt;OSC&gt;</div>
</body></html>
